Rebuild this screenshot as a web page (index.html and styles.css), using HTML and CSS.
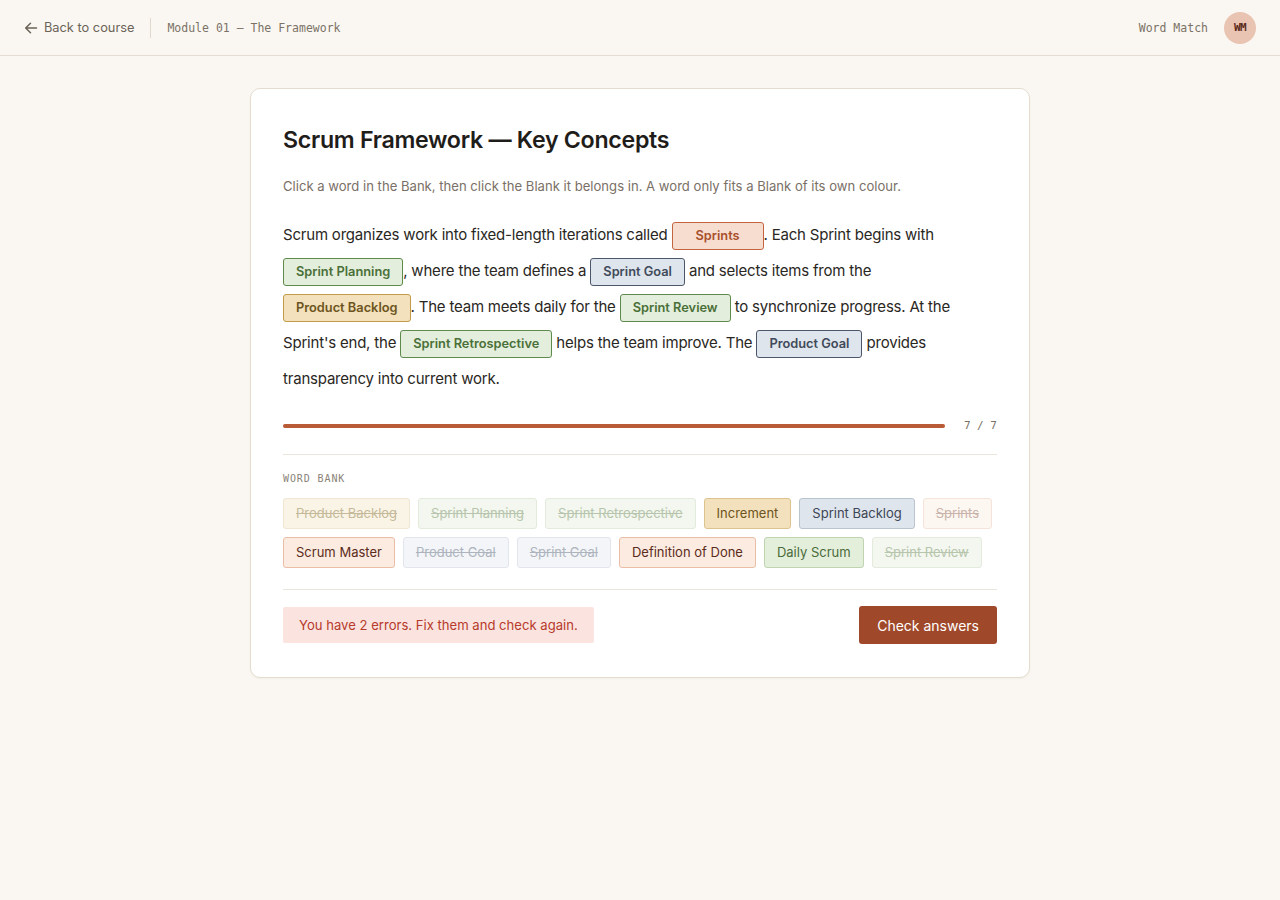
FILE: index.html
```html
<!DOCTYPE html>
<html lang="en">
<head>
  <meta charset="UTF-8" />
  <meta name="viewport" content="width=device-width, initial-scale=1" />
  <title>Word Match — Scrum Framework</title>
  <link rel="stylesheet" href="styles.css">
</head>
<body>
  <header class="topbar">
    <div class="topbar-left">
      <a class="back" href="#">
        <svg width="14" height="14" viewBox="0 0 14 14" fill="none" stroke="currentColor" stroke-width="1.5" stroke-linecap="round" stroke-linejoin="round"><path d="M12.5 7H1.8M6.5 2.2L1.7 7l4.8 4.8"/></svg>
        Back to course
      </a>
      <span class="sep"></span>
      <span class="module">Module 01 — The Framework</span>
    </div>
    <div class="topbar-right">
      <span class="app-name">Word Match</span>
      <span class="avatar">WM</span>
    </div>
  </header>

  <main class="page">
    <section class="card">
      <h1>Scrum Framework — Key Concepts</h1>
      <p class="hint">Click a word in the Bank, then click the Blank it belongs in. A word only fits a Blank of its own colour.</p>

      <!-- Texte à trous -->
      <p class="passage">
        Scrum organizes work into fixed-length iterations called <span class="blank c-orange wide">Sprints</span>. Each Sprint begins with
        <span class="blank c-green">Sprint Planning</span>, where the team defines a <span class="blank c-slate">Sprint Goal</span> and selects items from the
        <span class="blank c-gold">Product Backlog</span>. The team meets daily for the <span class="blank c-green">Sprint Review</span> to synchronize progress. At the
        Sprint's end, the <span class="blank c-green">Sprint Retrospective</span> helps the team improve. The <span class="blank c-slate">Product Goal</span> provides
        transparency into current work.
      </p>

      <div class="progress">
        <div class="track"><div class="fill" style="width: 100%"></div></div>
        <span class="count">7 / 7</span>
      </div>

      <div class="bank">
        <div class="bank-label">WORD BANK</div>
        <div class="chips">
          <span class="chip c-gold used">Product Backlog</span>
          <span class="chip c-green used">Sprint Planning</span>
          <span class="chip c-green used">Sprint Retrospective</span>
          <span class="chip c-gold">Increment</span>
          <span class="chip c-slate">Sprint Backlog</span>
          <span class="chip c-orange used">Sprints</span>
          <span class="chip c-orange">Scrum Master</span>
          <span class="chip c-slate used">Product Goal</span>
          <span class="chip c-slate used">Sprint Goal</span>
          <span class="chip c-orange">Definition of Done</span>
          <span class="chip c-green">Daily Scrum</span>
          <span class="chip c-green used">Sprint Review</span>
        </div>
      </div>

      <div class="footer">
        <div class="error">You have 2 errors. Fix them and check again.</div>
        <button class="check">Check answers</button>
      </div>
    </section>
  </main>
</body>
</html>
```

FILE: styles.css
```css
* { box-sizing: border-box; }
body {
  margin: 0; min-height: 100vh;
  background: #faf7f2; color: #1f1d1a;
  font-family: Inter, "Noto Sans", sans-serif;
}
.module, .app-name, .avatar, .count, .bank-label {
  font-family: "DejaVu Sans Mono", "Liberation Mono", monospace;
}

/* Barre du haut */
.topbar {
  height: 56px; padding: 0 24px;
  display: flex; justify-content: space-between; align-items: center;
  border-bottom: 1px solid #e3ddd2;
}
.topbar-left, .topbar-right { display: flex; align-items: center; }
.back {
  display: flex; align-items: center; gap: 6px;
  color: #6b6358; text-decoration: none; font-size: 12.8px;
}
.sep { width: 1px; height: 20px; background: #e0d9cc; margin: 0 16px; }
.module { font-size: 11.5px; color: #7a7266; }
.app-name { font-size: 11.5px; color: #7a7266; margin-right: 16px; }
.avatar {
  width: 32px; height: 32px; border-radius: 50%;
  background: #eac4b2; color: #5a2a1a;
  display: flex; align-items: center; justify-content: center;
  font-size: 11px; font-weight: 700; letter-spacing: -0.5px;
}

/* Carte */
.page { display: flex; justify-content: center; padding-top: 32px; }
.card {
  width: 780px; background: #fff;
  border: 1px solid #e4ddcf; border-radius: 10px;
  padding: 32px 32px 33px;
  box-shadow: 0 1px 2px rgba(60, 40, 20, 0.04);
}
h1 { margin: 2px 0 0; font-size: 23.2px; font-weight: 600; letter-spacing: -0.3px; line-height: 34px; }
.hint { margin: 19px 0 0; font-size: 13.1px; color: #7a7066; line-height: 20px; }

.passage {
  margin: 21px 0 0; font-size: 15px; letter-spacing: -0.2px; line-height: 36px; color: #2a2723;
}
.blank {
  display: inline-block; height: 28px; line-height: 26px;
  padding: 0 12px; border: 1px solid; border-radius: 3px;
  font-size: 12.8px; font-weight: 600; letter-spacing: 0; text-align: center;
  vertical-align: middle;
}
.blank.wide { min-width: 92px; }
.blank.c-orange { background: #f7ddd0; border-color: #c2643f; color: #a9502d; }
.blank.c-green { background: #e4eedc; border-color: #5e8a4c; color: #4a7039; }
.blank.c-slate { background: #dfe5ec; border-color: #4b5769; color: #3f4a5a; }
.blank.c-gold { background: #f2e1bc; border-color: #c39b48; color: #6d5420; }

/* Progression */
.progress { display: flex; align-items: center; gap: 19px; margin-top: 22px; }
.track { flex: 1; height: 4px; background: #efe9df; border-radius: 2px; }
.fill { height: 100%; background: #b95b37; border-radius: 2px; }
.count { font-size: 11px; color: #7a7266; }

/* Banque de mots */
.bank { margin-top: 22px; border-top: 1px solid #ebe6dd; padding-top: 18px; }
.bank-label { font-size: 10px; letter-spacing: 0.9px; color: #8a8378; }
.chips { display: flex; flex-wrap: wrap; gap: 8px; margin-top: 14px; padding-bottom: 21px; }
.chip {
  height: 31px; line-height: 29px; padding: 0 12px;
  border: 1px solid; border-radius: 3px; font-size: 13px;
}
.chip.c-orange { background: #fbebe0; border-color: #eabda6; color: #5b2b1b; }
.chip.c-green { background: #e3eedb; border-color: #bfd4b1; color: #4a6b3a; }
.chip.c-slate { background: #dfe5ec; border-color: #bac4cf; color: #3d4656; }
.chip.c-gold { background: #f2e1bc; border-color: #ddc48f; color: #6d5420; }
.chip.used { text-decoration: line-through; }
.chip.used.c-orange { background: #fdf7f2; border-color: #f6e4da; color: #c9b3aa; }
.chip.used.c-green { background: #f3f7ef; border-color: #e3ebdc; color: #b7c5ad; }
.chip.used.c-slate { background: #f3f5f8; border-color: #e2e6ec; color: #aeb4bd; }
.chip.used.c-gold { background: #faf4e7; border-color: #f0e7d2; color: #c5b999; }

/* Pied */
.footer {
  border-top: 1px solid #ebe6dd; padding-top: 16px;
  display: flex; justify-content: space-between; align-items: center;
}
.error {
  background: #fbe4df; color: #b63a2b; font-size: 13.1px;
  padding: 0 16px; height: 36px; line-height: 36px; border-radius: 2px;
}
.check {
  background: #a0492a; color: #fff; border: none; border-radius: 3px;
  height: 38px; padding: 0 18px; font-family: inherit; font-size: 14px; cursor: pointer;
}
```
